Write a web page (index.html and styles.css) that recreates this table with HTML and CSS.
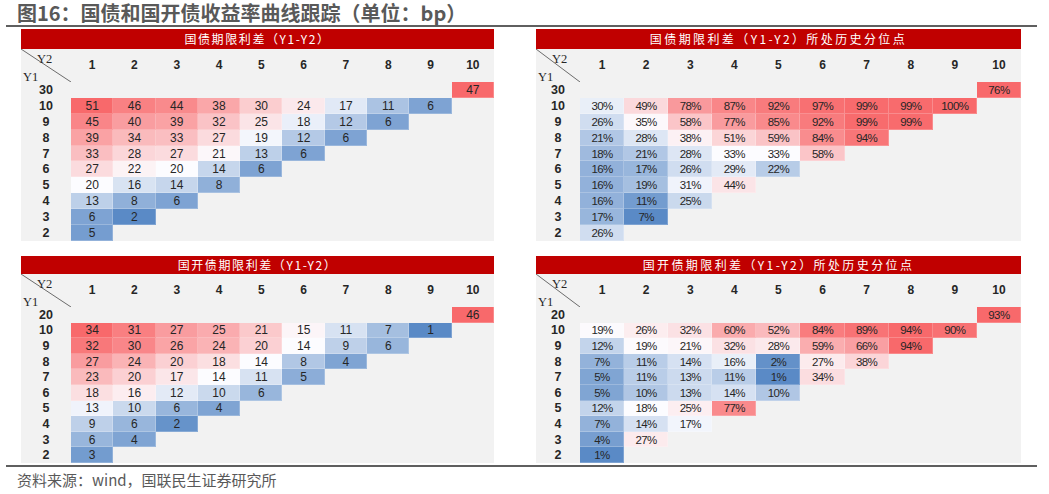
FILE: index.html
```html
<!DOCTYPE html>
<html lang="zh-CN">
<head>
<meta charset="utf-8">
<title>图16：国债和国开债收益率曲线跟踪</title>
<link rel="stylesheet" href="styles.css">
</head>
<body>
<h1 class="title">图16：国债和国开债收益率曲线跟踪（单位：bp）</h1>
<div class="rule"></div>
<div class="panels">
  <section class="panel l">
    <div class="panel-head">国债期限利差（Y1-Y2）</div>
    <div class="grid">
      <div class="corner"><svg class="diag" viewBox="0 0 50 33" preserveAspectRatio="none"><line x1="0" y1="0" x2="50" y2="33"/></svg><span class="y2">Y2</span><span class="y1">Y1</span></div>
      <div class="ch">1</div><div class="ch">2</div><div class="ch">3</div><div class="ch">4</div><div class="ch">5</div><div class="ch">6</div><div class="ch">7</div><div class="ch">8</div><div class="ch">9</div><div class="ch">10</div>
      <div class="rh">30</div><div class="v top">47</div>
      <div class="rh">10</div><div class="v">51</div><div class="v">46</div><div class="v">44</div><div class="v">38</div><div class="v">30</div><div class="v">24</div><div class="v">17</div><div class="v">11</div><div class="v">6</div>
      <div class="rh">9</div><div class="v">45</div><div class="v">40</div><div class="v">39</div><div class="v">32</div><div class="v">25</div><div class="v">18</div><div class="v">12</div><div class="v">6</div>
      <div class="rh">8</div><div class="v">39</div><div class="v">34</div><div class="v">33</div><div class="v">27</div><div class="v">19</div><div class="v">12</div><div class="v">6</div>
      <div class="rh">7</div><div class="v">33</div><div class="v">28</div><div class="v">27</div><div class="v">21</div><div class="v">13</div><div class="v">6</div>
      <div class="rh">6</div><div class="v">27</div><div class="v">22</div><div class="v">20</div><div class="v">14</div><div class="v">6</div>
      <div class="rh">5</div><div class="v">20</div><div class="v">16</div><div class="v">14</div><div class="v">8</div>
      <div class="rh">4</div><div class="v">13</div><div class="v">8</div><div class="v">6</div>
      <div class="rh">3</div><div class="v">6</div><div class="v">2</div>
      <div class="rh">2</div><div class="v">5</div>
    </div>
  </section>
  <section class="panel r">
    <div class="panel-head">国债期限利差（Y1-Y2）所处历史分位点</div>
    <div class="grid pct">
      <div class="corner"><svg class="diag" viewBox="0 0 44 33" preserveAspectRatio="none"><line x1="0" y1="0" x2="44" y2="33"/></svg><span class="y2">Y2</span><span class="y1">Y1</span></div>
      <div class="ch">1</div><div class="ch">2</div><div class="ch">3</div><div class="ch">4</div><div class="ch">5</div><div class="ch">6</div><div class="ch">7</div><div class="ch">8</div><div class="ch">9</div><div class="ch">10</div>
      <div class="rh">30</div><div class="v top">76%</div>
      <div class="rh">10</div><div class="v">30%</div><div class="v">49%</div><div class="v">78%</div><div class="v">87%</div><div class="v">92%</div><div class="v">97%</div><div class="v">99%</div><div class="v">99%</div><div class="v">100%</div>
      <div class="rh">9</div><div class="v">26%</div><div class="v">35%</div><div class="v">58%</div><div class="v">77%</div><div class="v">85%</div><div class="v">92%</div><div class="v">99%</div><div class="v">99%</div>
      <div class="rh">8</div><div class="v">21%</div><div class="v">28%</div><div class="v">38%</div><div class="v">51%</div><div class="v">59%</div><div class="v">84%</div><div class="v">94%</div>
      <div class="rh">7</div><div class="v">18%</div><div class="v">21%</div><div class="v">28%</div><div class="v">33%</div><div class="v">33%</div><div class="v">58%</div>
      <div class="rh">6</div><div class="v">16%</div><div class="v">17%</div><div class="v">26%</div><div class="v">29%</div><div class="v">22%</div>
      <div class="rh">5</div><div class="v">16%</div><div class="v">19%</div><div class="v">31%</div><div class="v">44%</div>
      <div class="rh">4</div><div class="v">16%</div><div class="v">11%</div><div class="v">25%</div>
      <div class="rh">3</div><div class="v">17%</div><div class="v">7%</div>
      <div class="rh">2</div><div class="v">26%</div>
    </div>
  </section>
  <section class="panel l low">
    <div class="panel-head">国开债期限利差（Y1-Y2）</div>
    <div class="grid">
      <div class="corner"><svg class="diag" viewBox="0 0 50 33" preserveAspectRatio="none"><line x1="0" y1="0" x2="50" y2="33"/></svg><span class="y2">Y2</span><span class="y1">Y1</span></div>
      <div class="ch">1</div><div class="ch">2</div><div class="ch">3</div><div class="ch">4</div><div class="ch">5</div><div class="ch">6</div><div class="ch">7</div><div class="ch">8</div><div class="ch">9</div><div class="ch">10</div>
      <div class="rh">20</div><div class="v top">46</div>
      <div class="rh">10</div><div class="v">34</div><div class="v">31</div><div class="v">27</div><div class="v">25</div><div class="v">21</div><div class="v">15</div><div class="v">11</div><div class="v">7</div><div class="v">1</div>
      <div class="rh">9</div><div class="v">32</div><div class="v">30</div><div class="v">26</div><div class="v">24</div><div class="v">20</div><div class="v">14</div><div class="v">9</div><div class="v">6</div>
      <div class="rh">8</div><div class="v">27</div><div class="v">24</div><div class="v">20</div><div class="v">18</div><div class="v">14</div><div class="v">8</div><div class="v">4</div>
      <div class="rh">7</div><div class="v">23</div><div class="v">20</div><div class="v">17</div><div class="v">14</div><div class="v">11</div><div class="v">5</div>
      <div class="rh">6</div><div class="v">18</div><div class="v">16</div><div class="v">12</div><div class="v">10</div><div class="v">6</div>
      <div class="rh">5</div><div class="v">13</div><div class="v">10</div><div class="v">6</div><div class="v">4</div>
      <div class="rh">4</div><div class="v">9</div><div class="v">6</div><div class="v">2</div>
      <div class="rh">3</div><div class="v">6</div><div class="v">4</div>
      <div class="rh">2</div><div class="v">3</div>
    </div>
  </section>
  <section class="panel r low">
    <div class="panel-head">国开债期限利差（Y1-Y2）所处历史分位点</div>
    <div class="grid pct">
      <div class="corner"><svg class="diag" viewBox="0 0 44 33" preserveAspectRatio="none"><line x1="0" y1="0" x2="44" y2="33"/></svg><span class="y2">Y2</span><span class="y1">Y1</span></div>
      <div class="ch">1</div><div class="ch">2</div><div class="ch">3</div><div class="ch">4</div><div class="ch">5</div><div class="ch">6</div><div class="ch">7</div><div class="ch">8</div><div class="ch">9</div><div class="ch">10</div>
      <div class="rh">20</div><div class="v top">93%</div>
      <div class="rh">10</div><div class="v">19%</div><div class="v">26%</div><div class="v">32%</div><div class="v">60%</div><div class="v">52%</div><div class="v">84%</div><div class="v">89%</div><div class="v">94%</div><div class="v">90%</div>
      <div class="rh">9</div><div class="v">12%</div><div class="v">19%</div><div class="v">21%</div><div class="v">32%</div><div class="v">28%</div><div class="v">59%</div><div class="v">66%</div><div class="v">94%</div>
      <div class="rh">8</div><div class="v">7%</div><div class="v">11%</div><div class="v">14%</div><div class="v">16%</div><div class="v">2%</div><div class="v">27%</div><div class="v">38%</div>
      <div class="rh">7</div><div class="v">5%</div><div class="v">11%</div><div class="v">13%</div><div class="v">11%</div><div class="v">1%</div><div class="v">34%</div>
      <div class="rh">6</div><div class="v">5%</div><div class="v">10%</div><div class="v">13%</div><div class="v">14%</div><div class="v">10%</div>
      <div class="rh">5</div><div class="v">12%</div><div class="v">18%</div><div class="v">25%</div><div class="v">77%</div>
      <div class="rh">4</div><div class="v">7%</div><div class="v">14%</div><div class="v">17%</div>
      <div class="rh">3</div><div class="v">4%</div><div class="v">27%</div>
      <div class="rh">2</div><div class="v">1%</div>
    </div>
  </section>
</div>
<div class="rule bottom"></div>
<p class="source">资料来源：wind，国联民生证券研究所</p>
<script src="script.js"></script>
</body>
</html>
```

FILE: styles.css
```css
html, body {
  margin: 0;
  padding: 0;
  background: #ffffff;
}
body {
  width: 1049px;
  height: 494px;
  overflow: hidden;
  font-family: "Liberation Sans", Arial, "Noto Sans CJK SC", sans-serif;
  color: #262626;
}
.title {
  margin: 0;
  height: 25px;
  padding-left: 17px;
  font: bold 20px/25px "Noto Sans CJK SC", sans-serif;
  color: #595959;
  white-space: nowrap;
}
.rule {
  height: 2px;
  margin: 0 12px 0 6px;
  background: #5f5f5f;
}
.rule.bottom {
  margin-top: 2px;
}
.panels {
  display: grid;
  grid-template-columns: 473px 485px;
  column-gap: 42px;
  row-gap: 15px;
  margin: 2px 0 0 21px;
}
.panel-head {
  height: 20px;
  background: #c00000;
  color: #ffffff;
  display: flex;
  align-items: center;
  justify-content: center;
  font: 12px/1 "Noto Sans CJK SC", sans-serif;
  letter-spacing: 1.6px;
  white-space: nowrap;
}
.panel.r .panel-head {
  letter-spacing: 2.4px;
}
.panel.low .panel-head {
  height: 18px;
}
.grid {
  display: grid;
  height: 192px;
  grid-template-rows: 33px repeat(10, 1fr);
  background: #f2f2f2;
}
.panel.low .grid {
  height: 189px;
}
.panel.l .grid {
  grid-template-columns: 50px repeat(10, 1fr);
}
.panel.r .grid {
  grid-template-columns: 44px repeat(10, 1fr);
}
.corner {
  position: relative;
  grid-column: 1;
}
.diag {
  position: absolute;
  inset: 0;
  width: 100%;
  height: 100%;
}
.diag line {
  stroke: #6b6b6b;
  stroke-width: 1;
  vector-effect: non-scaling-stroke;
}
.y2, .y1 {
  position: absolute;
  font: 12.5px/1 "Liberation Serif", "Times New Roman", serif;
  color: #262626;
}
.y2 {
  left: 16px;
  top: 4px;
}
.y1 {
  left: 2px;
  top: 22px;
}
.ch, .rh {
  display: flex;
  align-items: center;
  justify-content: center;
  font-weight: bold;
  font-size: 12px;
  color: #262626;
}
.ch {
  padding-bottom: 1px;
}
.rh {
  grid-column: 1;
  font-size: 12.5px;
}
.v {
  display: flex;
  align-items: center;
  justify-content: center;
  font-size: 12px;
  color: #262626;
  box-shadow: inset -1px -1px 0 rgba(255, 255, 255, 0.22);
}
.pct .v {
  font-size: 11.5px;
  letter-spacing: -0.6px;
}
.v.top {
  grid-column: -2;
}
.source {
  margin: 3px 0 0 17px;
  font: 15px/20px "Noto Sans CJK SC", sans-serif;
  color: #595959;
  white-space: nowrap;
}
```

FILE: script.js
```js
(function () {
  var BLUE = [90, 138, 198];
  var WHITE = [252, 252, 255];
  var RED = [248, 105, 107];

  function mix(a, b, t) {
    t = Math.max(0, Math.min(1, t));
    return 'rgb(' + [0, 1, 2].map(function (i) {
      return Math.round(a[i] + (b[i] - a[i]) * t);
    }).join(',') + ')';
  }

  function percentile(sorted, p) {
    var pos = (sorted.length - 1) * p;
    var lo = Math.floor(pos);
    var hi = Math.ceil(pos);
    return sorted[lo] + (sorted[hi] - sorted[lo]) * (pos - lo);
  }

  document.querySelectorAll('.grid').forEach(function (grid) {
    var cells = Array.prototype.slice.call(grid.querySelectorAll('.v:not(.top)'));
    var vals = cells.map(function (c) { return parseFloat(c.textContent); });
    var sorted = vals.slice().sort(function (a, b) { return a - b; });
    var min = sorted[0];
    var max = sorted[sorted.length - 1];
    var mid = percentile(sorted, 0.5);
    cells.forEach(function (c, i) {
      var v = vals[i];
      var col = v <= mid
        ? mix(BLUE, WHITE, (v - min) / (mid - min))
        : mix(WHITE, RED, (v - mid) / (max - mid));
      c.style.backgroundColor = col;
    });
    grid.querySelectorAll('.v.top').forEach(function (c) {
      c.style.backgroundColor = mix(WHITE, RED, 1);
    });
  });
})();
```
